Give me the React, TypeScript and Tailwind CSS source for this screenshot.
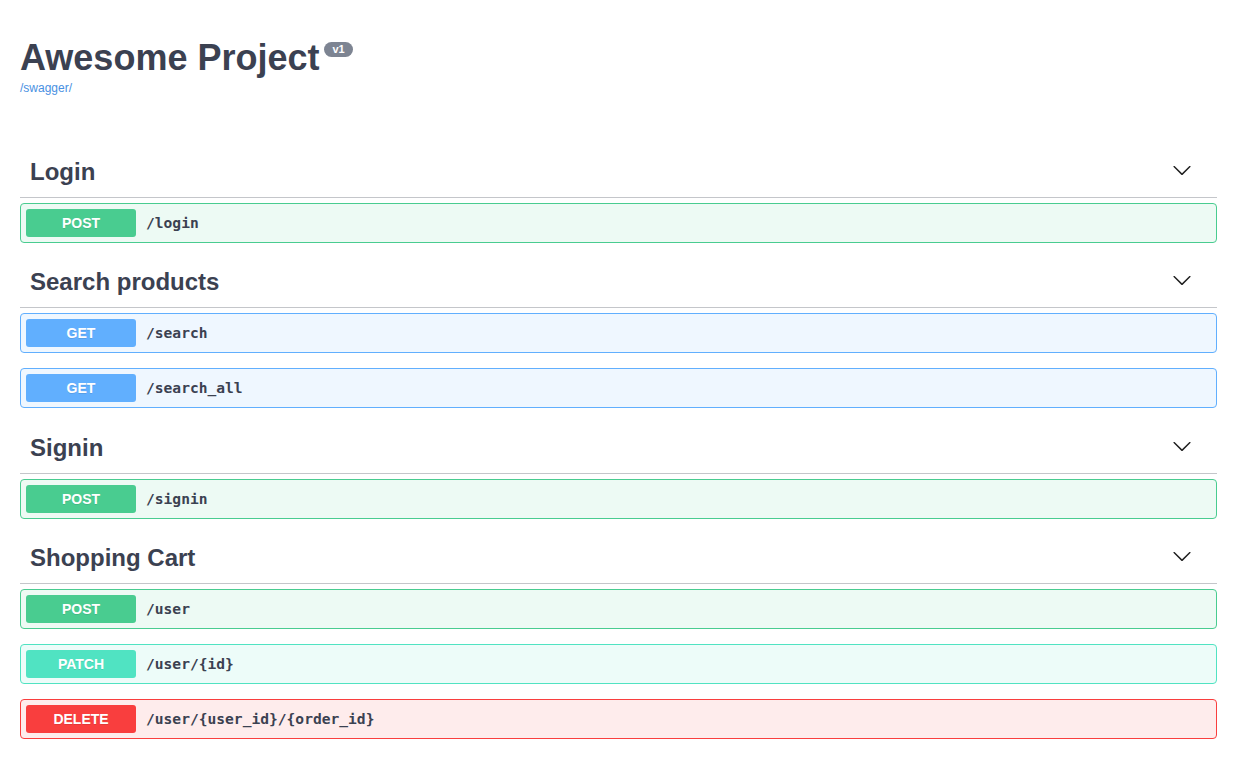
const sections = [
  {
    name: "Login",
    ops: [{ method: "POST", path: "/login" }],
  },
  {
    name: "Search products",
    ops: [
      { method: "GET", path: "/search" },
      { method: "GET", path: "/search_all" },
    ],
  },
  {
    name: "Signin",
    ops: [{ method: "POST", path: "/signin" }],
  },
  {
    name: "Shopping Cart",
    ops: [
      { method: "POST", path: "/user" },
      { method: "PATCH", path: "/user/{id}" },
      { method: "DELETE", path: "/user/{user_id}/{order_id}" },
    ],
  },
]

const methodStyles: Record<string, { block: string; badge: string }> = {
  GET: { block: "border-[#61affe] bg-[#eff7ff]", badge: "bg-[#61affe]" },
  POST: { block: "border-[#49cc90] bg-[#edfaf4]", badge: "bg-[#49cc90]" },
  PATCH: { block: "border-[#50e3c2] bg-[#edfcf9]", badge: "bg-[#50e3c2]" },
  DELETE: { block: "border-[#f93e3e] bg-[#feecec]", badge: "bg-[#f93e3e]" },
}

function Chevron() {
  return (
    <svg width="20" height="20" viewBox="0 0 20 20" className="fill-[#1f1f1f] mb-[6px]">
      <path d="M17.418 6.109c.272-.268.709-.268.979 0s.271.701 0 .969l-7.908 7.83c-.27.268-.707.268-.979 0l-7.908-7.83c-.27-.268-.27-.701 0-.969.271-.268.709-.268.979 0L10 13.25l7.418-7.141z" />
    </svg>
  )
}

function Operation({ method, path }: { method: string; path: string }) {
  const s = methodStyles[method]
  return (
    <div className={`flex items-center h-[40px] mb-[15px] border rounded-[4px] p-[5px] ${s.block}`}>
      <span
        className={`flex items-center justify-center w-[110px] h-[28px] rounded-[3px] text-white text-[14px] font-bold [text-shadow:0_1px_0_rgba(0,0,0,0.1)] ${s.badge}`}
      >
        {method}
      </span>
      <span className="px-[10px] text-[14.6px] font-bold text-[#3b4151] font-['DejaVu_Sans_Mono',monospace]">
        {path}
      </span>
    </div>
  )
}

export default function App() {
  return (
    <div className="min-h-screen bg-white pl-5 pr-[17px] font-['Liberation_Sans',Arial,sans-serif] text-[#3b4151]">
      <div className="pt-[37px]">
        <h1 className="text-[36px] leading-[41px] font-bold flex items-start">
          Awesome Project
          <span className="ml-[5px] mt-[5px] px-[8px] py-[2px] rounded-full bg-[#7d8492] text-white text-[11px] leading-[11px] font-bold">
            v1
          </span>
        </h1>
        <a className="block mt-[3px] text-[12px] leading-[14px] text-[#4990e2]">/swagger/</a>
      </div>

      <div className="mt-[53px]">
        {sections.map((sec, i) => (
          <div key={sec.name} className={i === 2 ? "pt-[1px]" : ""}>
            <div className="flex items-center justify-between h-[50px] border-b border-[rgba(59,65,81,0.3)] pl-[10px] pr-[25px]">
              <h3 className="text-[24px] font-bold mb-[2px]">{sec.name}</h3>
              <Chevron />
            </div>
            <div className="mt-[5px]">
              {sec.ops.map((op) => (
                <Operation key={op.path} method={op.method} path={op.path} />
              ))}
            </div>
          </div>
        ))}
      </div>
    </div>
  )
}
